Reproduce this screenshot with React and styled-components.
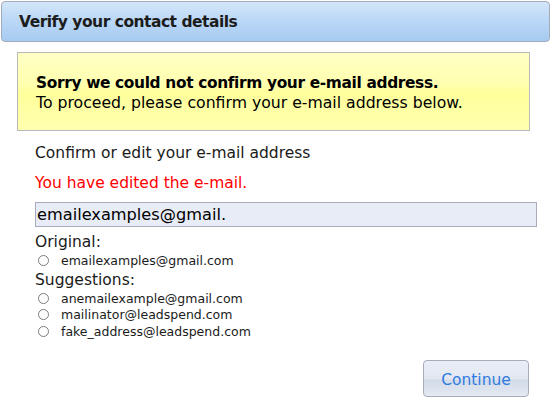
import React, { useState } from "react";
import styled, { createGlobalStyle } from "styled-components";

const GlobalStyle = createGlobalStyle`
  html, body {
    margin: 0;
    padding: 0;
    background: #ffffff;
  }
  body {
    font-family: "DejaVu Sans", Verdana, sans-serif;
    color: #1a1a1a;
  }
`;

const Page = styled.div`
  width: 552px;
  height: 400px;
  padding: 1px 2px 0 1px;
  box-sizing: border-box;
  display: flex;
  flex-direction: column;
`;

const Header = styled.div`
  height: 41px;
  box-sizing: border-box;
  border: 1px solid #a3aab8;
  border-radius: 4px;
  background: linear-gradient(#d3e6fa 0%, #bcd8f6 45%, #a6cbf1 100%);
  display: flex;
  align-items: center;
  padding: 1px 0 0 17px;
  font-size: 15.5px;
  letter-spacing: -0.5px;
  font-weight: bold;
  color: #1c1c1c;
`;

const Notice = styled.div`
  margin: 10px 20px 0 16px;
  height: 79px;
  box-sizing: border-box;
  border: 1px solid #b9b9b9;
  background: linear-gradient(#ffffc4 0%, #ffffb0 40%, #ffff9c 52%, #ffffb0 100%);
  display: flex;
  flex-direction: column;
  justify-content: center;
  padding: 2px 0 0 18px;
  font-size: 15.7px;
  line-height: 20px;
  color: #000;
`;

const NoticeTitle = styled.div`
  font-weight: bold;
  font-size: 15.4px;
  letter-spacing: -0.35px;
`;

const Body = styled.div`
  padding: 12px 15px 0 34px;
  display: flex;
  flex-direction: column;
`;

const Label = styled.div`
  font-size: 15.5px;
  line-height: 20px;
  color: ${(p) => (p.$error ? "#ff0000" : "#1a1a1a")};
  margin-top: ${(p) => p.$top || 0}px;
  margin-bottom: ${(p) => p.$gap || 0}px;
`;

const EmailInput = styled.input`
  box-sizing: border-box;
  width: 502px;
  height: 25px;
  border: 1px solid #a9abbc;
  background: #e8ecf6;
  font-family: "DejaVu Sans", Verdana, sans-serif;
  font-size: 16.2px;
  color: #000;
  padding: 0 1px;
  margin-bottom: 5px;
  outline: none;
`;

const OptionList = styled.div`
  display: flex;
  flex-direction: column;
`;

const Option = styled.label`
  display: flex;
  align-items: center;
  height: 16.8px;
  font-size: 12.5px;
  color: #1a1a1a;
  cursor: pointer;
`;

const RadioDot = styled.span`
  width: 11px;
  height: 11px;
  border: 1px solid #7c7c7c;
  border-radius: 50%;
  background: #fff;
  margin: 0 12px 0 3px;
  box-sizing: border-box;
  flex-shrink: 0;
  display: flex;
  align-items: center;
  justify-content: center;
  &::after {
    content: "";
    width: 5px;
    height: 5px;
    border-radius: 50%;
    background: ${(p) => (p.$on ? "#333" : "transparent")};
  }
`;

const Footer = styled.div`
  display: flex;
  justify-content: flex-end;
  padding: 20px 21px 0 0;
`;

const Button = styled.button`
  width: 106px;
  height: 37px;
  border: 1px solid #a6acba;
  border-radius: 4px;
  background: linear-gradient(#eaeef6 0%, #e2e7f1 50%, #d3dbe8 55%, #e4e9f2 100%);
  color: #2f7ce0;
  font-family: "DejaVu Sans", Verdana, sans-serif;
  font-size: 15.5px;
  padding-top: 3px;
  cursor: pointer;
`;

const original = ["emailexamples@gmail.com"];
const suggestions = [
  "anemailexample@gmail.com",
  "mailinator@leadspend.com",
  "fake_address@leadspend.com",
];

function Choice({ value, selected, onPick }) {
  return (
    <Option onClick={() => onPick(value)}>
      <RadioDot $on={selected === value} />
      {value}
    </Option>
  );
}

export default function App() {
  const [email, setEmail] = useState("emailexamples@gmail.");
  const [picked, setPicked] = useState(null);

  const pick = (v) => {
    setPicked(v);
    setEmail(v);
  };

  return (
    <>
      <GlobalStyle />
      <Page>
        <Header>Verify your contact details</Header>
        <Notice>
          <NoticeTitle>Sorry we could not confirm your e-mail address.</NoticeTitle>
          <div>To proceed, please confirm your e-mail address below.</div>
        </Notice>
        <Body>
          <Label $gap={10}>Confirm or edit your e-mail address</Label>
          <Label $error $gap={9}>You have edited the e-mail.</Label>
          <EmailInput value={email} onChange={(e) => setEmail(e.target.value)} />
          <Label>Original:</Label>
          <OptionList>
            {original.map((v) => (
              <Choice key={v} value={v} selected={picked} onPick={pick} />
            ))}
          </OptionList>
          <Label $top={1}>Suggestions:</Label>
          <OptionList>
            {suggestions.map((v) => (
              <Choice key={v} value={v} selected={picked} onPick={pick} />
            ))}
          </OptionList>
        </Body>
        <Footer>
          <Button>Continue</Button>
        </Footer>
      </Page>
    </>
  );
}
